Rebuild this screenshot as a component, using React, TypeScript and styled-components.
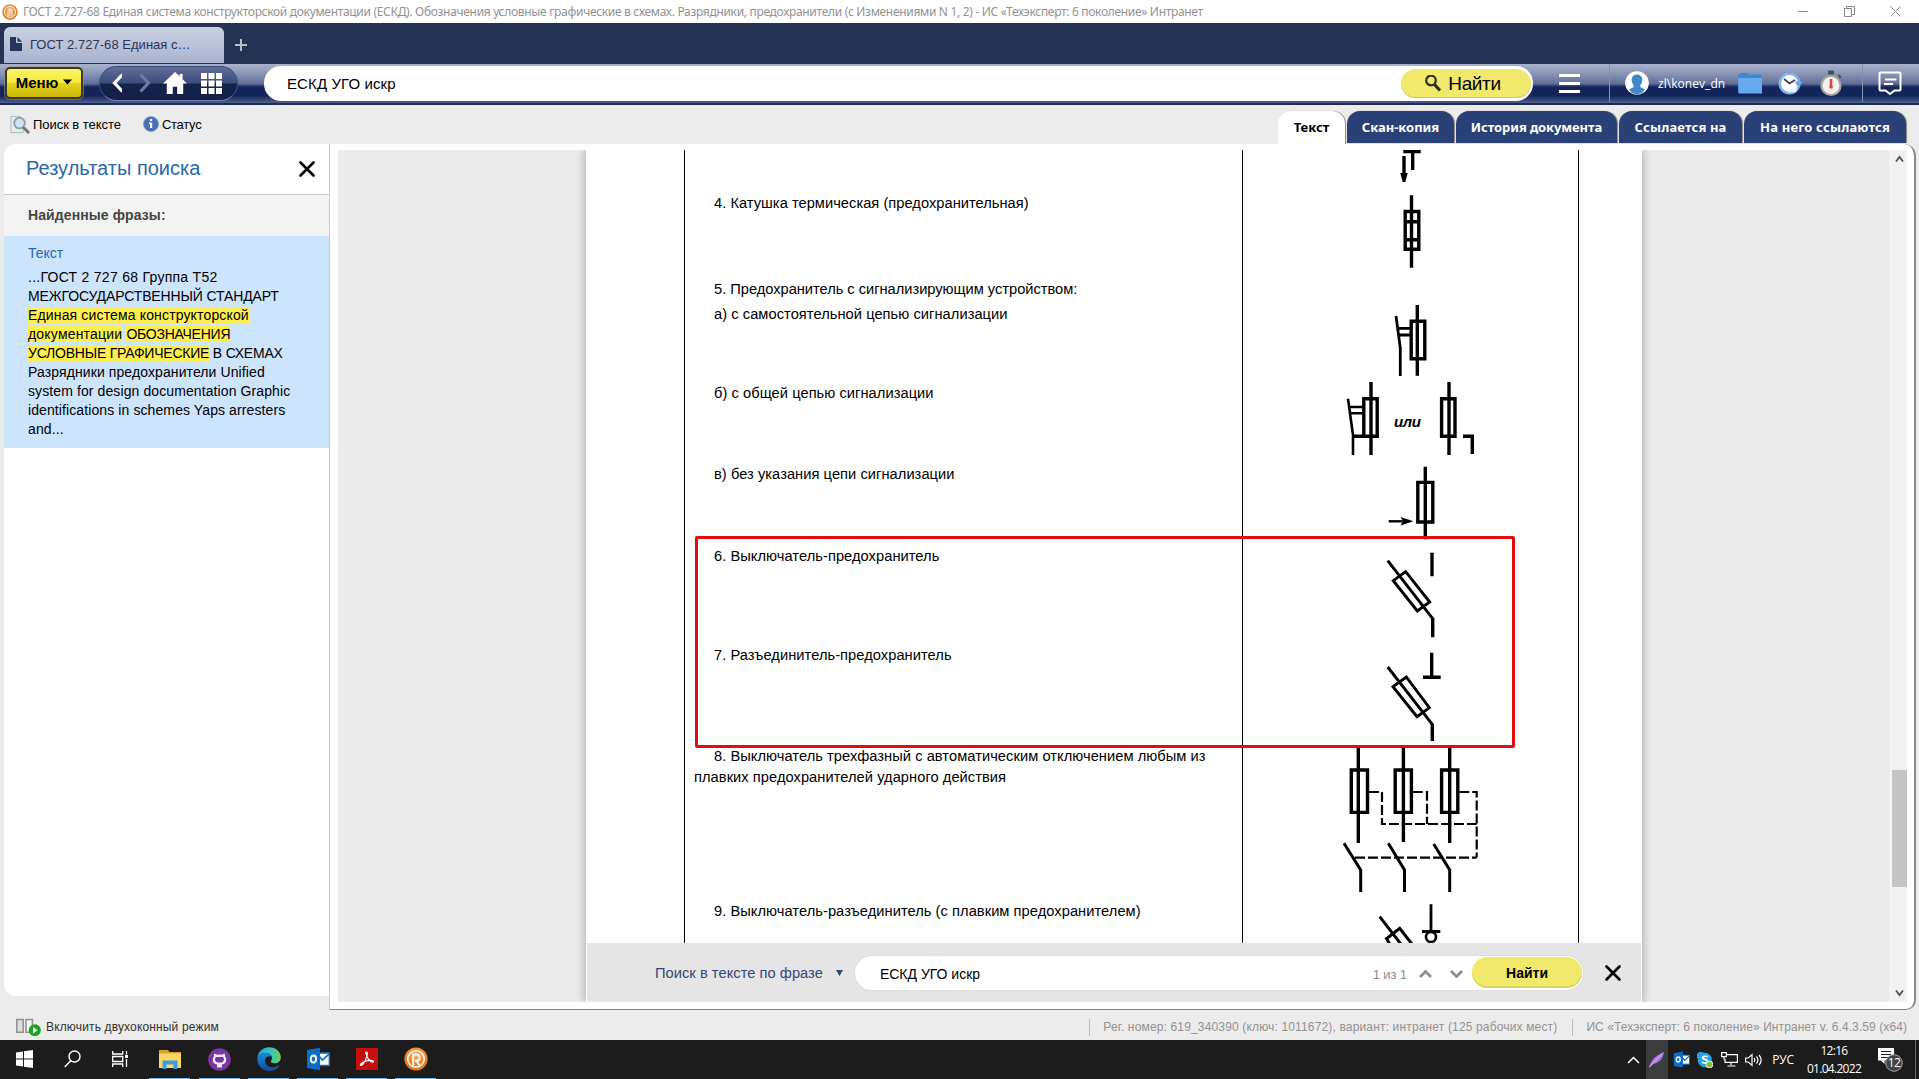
import React from 'react';
import styled, { createGlobalStyle, css } from 'styled-components';

const arial = '"Liberation Sans", Arial, sans-serif';
const segoe = '"Noto Sans", "Open Sans", sans-serif';
const segoeUi = '"Open Sans", "Noto Sans", sans-serif';

const Global = createGlobalStyle`
  * { box-sizing: border-box; }
  body { margin: 0; background: #ececec; font-family: ${arial}; color: #000; }
`;

const Screen = styled.div`
  width: 1919px;
  height: 1079px;
  display: flex;
  flex-direction: column;
  overflow: hidden;
  background: #ececec;
`;

const Label = styled.span<{ $ls?: number }>`
  white-space: pre;
  letter-spacing: ${p => p.$ls ?? 0}px;
`;

/* ---------- window title ---------- */
const TitleBar = styled.header`
  height: 23px;
  flex: none;
  display: flex;
  align-items: center;
  padding: 0 18px 0 2px;
  background: #fff;
  font: 12px/23px ${segoe};
  color: #929292;
`;
const TitleText = styled(Label)`
  flex: 1;
  margin-left: 5px;
`;
const WindowButtons = styled.div`
  display: flex;
  gap: 35px;
  align-items: center;
  height: 20px;
`;

/* ---------- browser tabs ---------- */
const TabStrip = styled.div`
  height: 41px;
  flex: none;
  display: flex;
  align-items: flex-end;
  padding: 0 0 1px 4px;
  background: #273352;
`;
const PageTab = styled.div`
  width: 220px;
  height: 36px;
  display: flex;
  align-items: center;
  gap: 8px;
  padding: 0 6px 2px;
  border-radius: 6px 6px 0 0;
  background: linear-gradient(#cbd1e2, #a9b3ce);
  color: #2b3453;
  font-size: 13px;
`;
const NewTab = styled.div`
  height: 36px;
  display: flex;
  align-items: center;
  margin-left: 11px;
`;

/* ---------- main toolbar ---------- */
const Toolbar = styled.div`
  height: 41px;
  flex: none;
  display: flex;
  align-items: center;
  padding: 0 0 3px 5px;
  background: linear-gradient(#a9b2cd 0, #8792b3 25%, #5f6d96 49%, #3b4a7b 51%, #13255a 57%, #13255a 78%, #56638e 96%, #1d2b54 96%);
`;
const MenuButton = styled.button`
  width: 78px;
  height: 32px;
  display: flex;
  align-items: center;
  justify-content: center;
  gap: 5px;
  padding: 0 0 2px;
  border: 2px solid #3b3a1c;
  border-radius: 5px;
  background: linear-gradient(#faf36a 0, #f5e93c 47%, #e3d11e 53%, #cdb908 100%);
  font: bold 15px ${arial};
  box-shadow: 0 0 0 1px rgba(160, 160, 130, 0.5);
`;
const NavPill = styled.nav`
  width: 139px;
  height: 35px;
  margin-left: 16px;
  display: flex;
  align-items: center;
  padding: 0 15px 0 12px;
  border-radius: 18px;
  border: 1px solid #3f4d7c;
  border-bottom-color: #7682a8;
  background: linear-gradient(#626e97 0, #3e4c7b 48%, #152349 52%, #13204a 100%);
`;
const SearchField = styled.div<{ $large?: boolean }>`
  display: flex;
  align-items: center;
  background: #fff;
  ${p =>
    p.$large
      ? css`
          width: 1269px;
          height: 35px;
          margin-left: 26px;
          padding: 0 2px 0 23px;
          border-radius: 17px;
          font-size: 15px;
        `
      : css`
          width: 732px;
          height: 34px;
          margin-left: 12px;
          padding: 0 1px 0 25px;
          border-radius: 17px;
          font-size: 14px;
          box-shadow: 0 0 0 1px #dedede;
        `}
`;
const FieldText = styled(Label)<{ $drop?: number }>`
  flex: 1;
  padding-top: ${p => p.$drop ?? 0}px;
`;
const FindButton = styled.button<{ $large?: boolean }>`
  display: flex;
  align-items: center;
  justify-content: center;
  border: 0;
  background: #f0e96c;
  color: #000;
  ${p =>
    p.$large
      ? css`
          width: 130px;
          height: 29px;
          gap: 6px;
          padding: 1px 7px 0 0;
          border-radius: 15px;
          font: 19px ${arial};
          box-shadow: inset 0 -1px 0 #cfc765;
        `
      : css`
          width: 110px;
          height: 31px;
          padding: 0;
          border-radius: 16px;
          font: bold 14px ${arial};
          box-shadow: inset 0 -2px 0 #dcd45f;
        `}
`;
const ToolIcon = styled.div<{ $ml: number }>`
  display: flex;
  margin-left: ${p => p.$ml}px;
`;
const Divider = styled.div<{ $ml: number; $mr?: number; $h: number; $c: string }>`
  width: 1px;
  height: ${p => p.$h}px;
  margin-left: ${p => p.$ml}px;
  margin-right: ${p => p.$mr ?? 0}px;
  background: ${p => p.$c};
`;
const UserName = styled(Label)`
  margin-left: 9px;
  width: 80px;
  padding-top: 1px;
  color: #fff;
  font: 12px ${segoeUi};
`;

/* ---------- secondary bar ---------- */
const SubBar = styled.div`
  height: 39px;
  flex: none;
  display: flex;
  align-items: flex-start;
  justify-content: space-between;
  padding: 6px 13px 0 10px;
`;
const Tools = styled.div`
  display: flex;
  align-items: center;
  height: 26px;
  font-size: 13px;
  gap: 3px;
`;
const StatusTool = styled.div`
  display: flex;
  align-items: center;
  gap: 3px;
  margin-left: 19px;
`;
const DocTabs = styled.div`
  display: flex;
  gap: 2px;
`;
const DocTab = styled.div<{ $w: number; $active?: boolean }>`
  width: ${p => p.$w}px;
  height: ${p => (p.$active ? 33 : 32)}px;
  display: flex;
  align-items: center;
  justify-content: center;
  padding-bottom: ${p => (p.$active ? 2 : 0)}px;
  border-radius: 13px 13px 0 0;
  background: ${p => (p.$active ? '#fff' : '#2a4178')};
  color: ${p => (p.$active ? '#000' : '#fff')};
  font: bold 13px ${segoe};
  box-shadow: 1px 0 1px #8d8877;
`;

/* ---------- body ---------- */
const Body = styled.main`
  height: 866px;
  flex: none;
  display: flex;
  padding: 0 3px 0 4px;
`;
const Results = styled.aside`
  width: 325px;
  height: 852px;
  border-radius: 12px 0 0 12px;
  background: #fff;
  overflow: hidden;
`;
const ResultsHead = styled.div`
  height: 51px;
  display: flex;
  align-items: center;
  justify-content: space-between;
  padding: 0 14px 1px 22px;
  border-bottom: 1px solid #c9c9c9;
  font-size: 20px;
  color: #2a68a6;
`;
const FoundHead = styled.div`
  height: 41px;
  padding-left: 24px;
  background: #f3f3f3;
  font: bold 14px/41px ${arial};
  letter-spacing: 0.1px;
  color: #444;
`;
const Hit = styled.div`
  height: 212px;
  padding: 8px 0 0 24px;
  background: #cde4fd;
  font-size: 14px;
  line-height: 19px;
`;
const HitTitle = styled.div`
  margin-bottom: 5px;
  color: #2a68a6;
`;
const HitLine = styled.div<{ $ls?: number }>`
  white-space: pre;
  letter-spacing: ${p => p.$ls ?? 0.1}px;
`;
const Mark = styled.mark<{ $ls?: number }>`
  background: #ffee50;
  color: inherit;
  letter-spacing: ${p => (p.$ls === undefined ? 'inherit' : `${p.$ls}px`)};
`;

const Viewer = styled.section`
  width: 1587px;
  height: 866px;
  display: flex;
  padding: 6px 7px 7px 8px;
  background: #fff;
  border: 1px solid #8a8a8a;
  border-top: 0;
  border-left-color: #c8c8c8;
  border-radius: 0 12px 10px 0;
  border-bottom-width: 1px;
  border-bottom-color: #858585;
  border-right-width: 2px;
`;
const Canvas = styled.div`
  width: 1552px;
  flex: none;
  height: 852px;
  padding-left: 248px;
  background: #ebebeb;
`;
const Sheet = styled.div`
  width: 1056px;
  height: 852px;
  background: #fff;
  box-shadow: 0 0 9px 1px rgba(0, 0, 0, 0.28);
  clip-path: inset(0 -14px);
`;
const TableArea = styled.div`
  position: relative;
  width: 895px;
  height: 793px;
  margin-left: 98px;
  border-left: 1px solid #000;
  border-right: 1px solid #000;
`;
const Row = styled.div<{ $h: number }>`
  display: grid;
  grid-template-columns: 558px 335px;
  height: ${p => p.$h}px;
`;
const TextCell = styled.div<{ $ls?: number }>`
  padding: 1px 0 0 9px;
  border-right: 1px solid #000;
  font-size: 14.67px;
  line-height: 21px;
  text-indent: 20px;
  letter-spacing: ${p => p.$ls ?? 0.05}px;
  white-space: pre;
`;
const Drawing = styled.svg`
  display: block;
  stroke: #000;
  stroke-width: 3.4;
  fill: none;
`;
const RedFrame = styled.div`
  position: absolute;
  left: 10px;
  top: 386px;
  width: 820px;
  height: 212px;
  border: 3px solid #e40d0d;
  border-radius: 2px;
`;
const FindBar = styled.div`
  height: 59px;
  width: 1054px;
  margin-left: 1px;
  padding: 0 20px 0 68px;
  display: flex;
  align-items: center;
  background: #e5e5e5;
`;
const Mode = styled.div`
  display: flex;
  align-items: center;
  gap: 13px;
  color: #34457c;
  font-size: 14.67px;
`;
const Counter = styled(Label)`
  color: #8d8d8d;
  font-size: 13px;
  padding-top: 3px;
  margin-right: 12px;
`;
const Arrows = styled.div`
  display: flex;
  gap: 18px;
  margin: 2px 9px 0 0;
`;
const CloseFind = styled.div`
  display: flex;
  margin-left: 22px;
`;
const ScrollBar = styled.div`
  width: 17px;
  flex: none;
  height: 852px;
  display: flex;
  flex-direction: column;
  align-items: center;
  justify-content: space-between;
  background: #f1f1f1;
  border-left: 1px solid #fafafa;
  padding: 5px 0;
`;
const ScrollTrack = styled.div`
  flex: 1;
  width: 15px;
  padding-top: 607px;
`;
const ScrollThumb = styled.div`
  height: 117px;
  background: #c4c4c4;
`;

/* ---------- status bar ---------- */
const StatusBar = styled.footer`
  height: 30px;
  flex: none;
  display: flex;
  align-items: center;
  padding: 4px 12px 0 16px;
  font-size: 12px;
  color: #929292;
`;
const TwoPane = styled.div`
  flex: 1;
  display: flex;
  align-items: center;
  gap: 5px;
  color: #333;
`;

/* ---------- taskbar ---------- */
const TaskBar = styled.div`
  height: 39px;
  flex: none;
  display: flex;
  background: #1c1c1c;
  color: #fff;
  font: 12px/22px ${segoeUi};
`;
const Task = styled.div<{ $w?: number; $open?: boolean }>`
  width: ${p => p.$w ?? 49}px;
  display: flex;
  align-items: center;
  justify-content: center;
  padding-bottom: 1px;
  background: ${p => (p.$open ? 'linear-gradient(90deg, transparent 4px, #76b9ed 4px, #76b9ed 45px, transparent 45px) 0 38px / 100% 1px no-repeat' : 'none')};
`;
const Tray = styled.div`
  margin-left: auto;
  display: flex;
  align-items: center;
`;
const TrayItem = styled.div<{ $w: number; $lit?: boolean }>`
  width: ${p => p.$w}px;
  height: 39px;
  display: flex;
  align-items: center;
  justify-content: center;
  background: ${p => (p.$lit ? '#3d3d3d' : 'none')};
`;
const Clock = styled.div`
  width: 62px;
  text-align: center;
  line-height: 18px;
  letter-spacing: -0.7px;
`;
const Notice = styled.div`
  width: 51px;
  height: 39px;
  display: flex;
  align-items: center;
  justify-content: center;
  border-right: 1px solid #6a6a6a;
  margin-right: 3px;
`;

const Cross = ({ size, w = 2.6 }: { size: number; w?: number }) => (
  <svg width={size} height={size} viewBox="0 0 16 16" stroke="#000" strokeWidth={w} strokeLinecap="round">
    <path d="M1.500 1.500 14.500 14.500M14.500 1.500 1.500 14.500" />
  </svg>
);

const Orb = ({ size, letter }: { size: number; letter?: boolean }) => (
  <svg width={size} height={size} viewBox="0 0 24 24" fill="none">
    <defs>
      <radialGradient id={`orb${size}`} cx=".5" cy=".35" r=".65">
        <stop offset="0" stopColor="#f7b060" />
        <stop offset="1" stopColor="#dd6f1c" />
      </radialGradient>
    </defs>
    <circle cx="12" cy="12" r="11.600" fill={`url(#orb${size})`} />
    <circle cx="12" cy="12" r="8.300" stroke="#fff" strokeWidth="1.400" />
    {letter ? (
      <path d="M9.200 20V7.400h3.400a3 3 0 0 1 0 6.200H11M12.400 13.800l3.400 5.200" stroke="#fff" strokeWidth="1.800" />
    ) : (
      <path d="M9 19v-8.500a3 3 0 0 1 6 0V19M12 7v12" stroke="#fff" strokeWidth="1.400" />
    )}
  </svg>
);

const Outlook = ({ size }: { size: number }) => (
  <svg width={size} height={size} viewBox="0 0 24 24">
    <rect x="10" y="6" width="13" height="12.500" fill="#fff" />
    <path d="M13 6h10.300v12.500H13z" fill="#fff" stroke="#0a6fc4" strokeWidth="1.400" />
    <path d="m13.400 9.500 3 3.600L23 7.200" fill="none" stroke="#0a6fc4" strokeWidth="1.700" />
    <path d="M1 3 14 .8v22.400L1 21z" fill="#0a6fc4" />
    <ellipse cx="7.400" cy="12" rx="2.700" ry="3.500" fill="none" stroke="#fff" strokeWidth="1.900" />
  </svg>
);

type RowData = { y: number; h: number; ls?: number; text?: string; art?: React.ReactNode };

const rows: RowData[] = [
  {
    y: 150,
    h: 42,
    art: (
      <>
        <path d="M1403.3 151.5h17.4M1412.7 151v19M1404 156v18" />
        <path d="M1400.3 173h7.4l-2.4 9h-2.6z" fill="#000" stroke="none" />
      </>
    ),
  },
  {
    y: 192,
    h: 86,
    ls: 0.03,
    text: '4. Катушка термическая (предохранительная)',
    art: <path d="M1411.5 195.3v72.4M1405.2 211.5h13.6v37.7h-13.6zM1405 221.7h14M1405 239.7h14" />,
  },
  { y: 278, h: 25, ls: -0.02, text: '5. Предохранитель с сигнализирующим устройством:' },
  {
    y: 303,
    h: 79,
    text: 'а) с самостоятельной цепью сигнализации',
    art: (
      <>
        <path d="M1417.3 305v70.7M1411.2 321.2h13.6v37.6h-13.6z" />
        <path d="M1396 316l4.3 32v28M1398 328.3h13M1399 335h12" strokeWidth="2.800" />
      </>
    ),
  },
  {
    y: 382,
    h: 81,
    text: 'б) с общей цепью сигнализации',
    art: (
      <>
        <path d="M1371 382v73M1363.8 398.8h13.4v37.4h-13.4zM1449 382v73M1441.6 398.8h13.4v37.4h-13.4zM1463 436.3h9.3v17.7M1352.5 436.3h11" />
        <path d="M1348 398.7l5 36.3v20M1350 407h13M1350.5 413.2h12.5" strokeWidth="2.600" />
        <text x="1394" y="426.500" fontFamily={arial} fontSize="15" fontStyle="italic" fontWeight="bold" fill="#000" stroke="none" textLength="27">
          или
        </text>
      </>
    ),
  },
  {
    y: 463,
    h: 82,
    text: 'в) без указания цепи сигнализации',
    art: (
      <>
        <path d="M1425.3 466.7v72.5M1417.8 482.4h15v39.6h-15z" />
        <path d="M1388.7 521.3h14" strokeWidth="2.400" />
        <path d="M1400.5 517l13 4.3-13 4.3 2.5-4.3z" fill="#000" stroke="none" />
      </>
    ),
  },
  {
    y: 545,
    h: 99,
    text: '6. Выключатель-предохранитель',
    art: (
      <>
        <path d="M1432 552.7v23.6M1432.7 618v19.3" />
        <path d="M1387.7 560.7l45 58M1393.3 580.7l12.4-9 24 30.3-12.4 9z" strokeWidth="2.900" />
      </>
    ),
  },
  {
    y: 644,
    h: 101,
    text: '7. Разъединитель-предохранитель',
    art: (
      <>
        <path d="M1431.7 652.7v24M1423 677.3h17.7M1432.3 723.5v17.5" />
        <path d="M1387.7 667l44.6 57.3M1393 686.7l13.3-9.7 23 30.7-12.3 9z" strokeWidth="2.900" />
      </>
    ),
  },
  {
    y: 745,
    h: 155,
    text: '8. Выключатель трехфазный с автоматическим отключением любым из\nплавких предохранителей ударного действия',
    art: (
      <>
        <path d="M1358.3 747v96M1403.4 747v95M1449.7 747v96M1351.3 770h16.2v42.4h-16.2zM1395.2 770h16.2v42.4h-16.2zM1441.6 770h16.2v42.4h-16.2z" />
        <path d="M1344 843.3l16.7 26.7v22M1388.3 843.3l16.2 26.7v22M1433.7 844l16 26v22" strokeWidth="3" />
        <g strokeWidth="2.200" strokeDasharray="10 3">
          <path d="M1369 792h13v32h94.7M1412.7 792h14.3v32M1459.3 792h17.4v65.3M1355 857.7h121.7" />
        </g>
      </>
    ),
  },
  {
    y: 900,
    h: 43,
    text: '9. Выключатель-разъединитель (с плавким предохранителем)',
    art: (
      <>
        <path d="M1431 904.3v27M1422 931.5h18.3" strokeWidth="2.800" />
        <circle cx="1431" cy="937" r="5" strokeWidth="2.600" />
        <path d="M1379.7 916.7l22 28.4M1391 946l-4.5-7.3 13.2-10.4 14 18" strokeWidth="3" />
      </>
    ),
  },
];

export default function App() {
  return (
    <Screen>
      <Global />
      <TitleBar>
        <Orb size={16} />
        <TitleText $ls={-0.313}>
          ГОСТ 2.727-68 Единая система конструкторской документации (ЕСКД). Обозначения условные графические в схемах. Разрядники, предохранители (с Изменениями N 1, 2) - ИС «Техэксперт: 6 поколение» Интранет
        </TitleText>
        <WindowButtons>
          <svg width="11" height="11" stroke="#8a8a8a" fill="none"><path d="M0 5.500h10" /></svg>
          <svg width="11" height="11" stroke="#8a8a8a" fill="none"><path d="M.5 2.500h7v8h-7zM2.500 2.500v-2h8v8h-2.500" /></svg>
          <svg width="11" height="11" stroke="#8a8a8a" fill="none"><path d="M.5.5l10 10M10.500.5l-10 10" /></svg>
        </WindowButtons>
      </TitleBar>

      <TabStrip>
        <PageTab>
          <svg width="12" height="14" fill="#27335a"><path d="M0 0h6v6h6v8H0zM7.500 0 12 4.700H7.500z" /></svg>
          <Label $ls={0.03}>ГОСТ 2.727-68 Единая с…</Label>
        </PageTab>
        <NewTab>
          <svg width="12" height="12" stroke="#b9bfcc" strokeWidth="2"><path d="M6 0v12M0 6h12" /></svg>
        </NewTab>
      </TabStrip>

      <Toolbar>
        <MenuButton>
          <Label>Меню</Label>
          <svg width="9" height="6"><path d="M0 .5h9L4.500 5.500z" /></svg>
        </MenuButton>
        <NavPill>
          <svg width="12" height="20" fill="none" stroke="#fff" strokeWidth="3.200"><path d="M10.500 1.500 2.500 10l8 8.500" /></svg>
          <ToolIcon $ml={17}>
            <svg width="12" height="20" fill="none" stroke="#6f7a9c" strokeWidth="3.200"><path d="M1.500 1.500 9.500 10l-8 8.500" /></svg>
          </ToolIcon>
          <ToolIcon $ml={12}>
            <svg width="24" height="22" fill="#fff"><path d="M12 0 0 11.500h3.800V22h6v-7.200h4.400V22h6V11.500H24l-4.400-4.200V2h-3v2.300z" /></svg>
          </ToolIcon>
          <ToolIcon $ml={14}>
            <svg width="21" height="21" fill="#fff">
              {[0, 7.5, 15].map(y => [0, 7.5, 15].map(x => <rect key={`${x}-${y}`} x={x} y={y} width="6" height="6" />))}
            </svg>
          </ToolIcon>
        </NavPill>
        <SearchField $large>
          <FieldText $ls={0.1}>ЕСКД УГО искр</FieldText>
          <FindButton $large>
            <svg width="18" height="18" fill="none" stroke="#33301a">
              <circle cx="7" cy="5.500" r="4.800" strokeWidth="2.200" />
              <path d="M10.500 9.500 16 15.500" strokeWidth="3.200" />
            </svg>
            <Label $ls={-0.35}>Найти</Label>
          </FindButton>
        </SearchField>
        <ToolIcon $ml={26}>
          <svg width="21" height="19" fill="#fff"><path d="M0 0h21v3H0zM0 8h21v3H0zM0 16h21v3H0z" /></svg>
        </ToolIcon>
        <Divider $ml={29} $h={38} $c="#8792b3" />
        <ToolIcon $ml={15}>
          <svg width="24" height="24" viewBox="0 0 24 24">
            <circle cx="12" cy="12" r="11.800" fill="#fff" />
            <path d="M12 3.500c3.600 0 5.300 2.500 5.300 5.600 0 2.500-1 4-2 5.200v1.800l4.700 2.400a11 11 0 0 1-16 0l4.700-2.400v-1.800c-1-1.200-2-2.700-2-5.200 0-3.100 1.700-5.600 5.300-5.600z" fill="#3f86c6" />
            <path d="M4.500 19a11 11 0 0 0 15 0l-2 2.800-5.500 2-5.500-2z" fill="#3f86c6" />
          </svg>
        </ToolIcon>
        <UserName $ls={0.05}>zl\konev_dn</UserName>
        <ToolIcon $ml={0}>
          <svg width="24" height="21"><path d="M0 1.500h2L3 0h7l1 1.500h12V20H0z" fill="#3f86d0" /><path d="M0 5h24v15.500H1z" fill="#67a9ef" /></svg>
        </ToolIcon>
        <ToolIcon $ml={16}>
          <svg width="25" height="23" viewBox="0 0 25 23">
            <circle cx="11.500" cy="11.500" r="9.700" fill="#fff" stroke="#7db4ee" strokeWidth="2.600" />
            <path d="M17 9.500h8l-5 7z" fill="#67a9ef" />
            <path d="M10 20.500 20 13l-2 7z" fill="#e9f2fc" />
            <path d="m6 7 5.500 4.500L17 8" fill="none" stroke="#3c3f4a" strokeWidth="1.800" />
          </svg>
        </ToolIcon>
        <ToolIcon $ml={17}>
          <svg width="23" height="27" viewBox="0 0 23 27">
            <path d="M8.500 1h5v3h-5zM18 4.500l3 2-1.500 2" fill="#4b4b50" stroke="#4b4b50" />
            <circle cx="11" cy="15.500" r="9.500" fill="#f4f2ee" stroke="#aaa59d" strokeWidth="2.200" />
            <path d="M11 9v8" stroke="#e2453c" strokeWidth="2.600" />
            <circle cx="11" cy="17" r="1.800" fill="#e2453c" />
          </svg>
        </ToolIcon>
        <Divider $ml={19} $h={38} $c="#8792b3" />
        <ToolIcon $ml={15}>
          <svg width="24" height="25" fill="none" stroke="#fff" strokeWidth="2">
            <path d="M2.500 1.500h19a1 1 0 0 1 1 1v16a1 1 0 0 1-1 1h-5L12 23l-4.500-3.500h-5a1 1 0 0 1-1-1v-16a1 1 0 0 1 1-1z" />
            <path d="M7 8.500h11.500M6 13h9" />
          </svg>
        </ToolIcon>
      </Toolbar>

      <SubBar>
        <Tools>
          <svg width="20" height="19" viewBox="0 0 21 19">
            <path d="M1 1h9l4 3v14H1z" fill="#e4eef0" stroke="#a9b9bd" />
            <circle cx="10" cy="8" r="5.600" fill="#cfe3f1" stroke="#8fa0aa" strokeWidth="2" />
            <path d="m14.500 13 4.500 4.500" stroke="#777" strokeWidth="3" strokeLinecap="round" />
          </svg>
          <Label $ls={-0.05}>Поиск в тексте</Label>
          <StatusTool>
            <svg width="16" height="16" viewBox="0 0 16 16">
              <circle cx="8" cy="8" r="7.600" fill="#4a70b8" stroke="#8aa3cf" strokeWidth=".8" />
              <path d="M7 3h2.200v2H7zM6 6.500h3.200V12H7V8H6z" fill="#fff" />
            </svg>
            <Label $ls={-0.25}>Статус</Label>
          </StatusTool>
        </Tools>
        <DocTabs>
          <DocTab $w={67} $active>Текст</DocTab>
          <DocTab $w={107}><Label>Скан-копия</Label></DocTab>
          <DocTab $w={161}><Label $ls={-0.1}>История документа</Label></DocTab>
          <DocTab $w={123}><Label $ls={0.15}>Ссылается на</Label></DocTab>
          <DocTab $w={162}><Label $ls={0.16}>На него ссылаются</Label></DocTab>
        </DocTabs>
      </SubBar>

      <Body>
        <Results>
          <ResultsHead>
            <Label>Результаты поиска</Label>
            <Cross size={16} />
          </ResultsHead>
          <FoundHead>Найденные фразы:</FoundHead>
          <Hit>
            <HitTitle>Текст</HitTitle>
            <HitLine $ls={0.27}>...ГОСТ 2 727 68 Группа Т52</HitLine>
            <HitLine $ls={-0.13}>МЕЖГОСУДАРСТВЕННЫЙ СТАНДАРТ</HitLine>
            <HitLine $ls={0.15}><Mark>Единая система конструкторской</Mark></HitLine>
            <HitLine $ls={0.2}><Mark>документации</Mark> <Mark $ls={-0.25}>ОБОЗНАЧЕНИЯ</Mark></HitLine>
            <HitLine $ls={-0.22}><Mark>УСЛОВНЫЕ ГРАФИЧЕСКИЕ</Mark> В СХЕМАХ</HitLine>
            <HitLine>Разрядники предохранители Unified</HitLine>
            <HitLine>system for design documentation Graphic</HitLine>
            <HitLine>identifications in schemes Yaps arresters</HitLine>
            <HitLine>and...</HitLine>
          </Hit>
        </Results>

        <Viewer>
          <Canvas>
            <Sheet>
              <TableArea>
                {rows.map(r => (
                  <Row key={r.y} $h={r.h}>
                    <TextCell $ls={r.ls}>{r.text}</TextCell>
                    <Drawing width="335" height={r.h} viewBox={`1243 ${r.y} 335 ${r.h}`}>{r.art}</Drawing>
                  </Row>
                ))}
                <RedFrame />
              </TableArea>
              <FindBar>
                <Mode>
                  <Label $ls={0.04}>Поиск в тексте по фразе</Label>
                  <svg width="7" height="6" fill="#34457c"><path d="M0 0h7L3.500 6z" /></svg>
                </Mode>
                <SearchField>
                  <FieldText $drop={2}>ЕСКД УГО искр</FieldText>
                  <Counter $ls={-0.1}>1 из 1</Counter>
                  <Arrows>
                    <svg width="13" height="8" fill="none" stroke="#8f8f8f" strokeWidth="2.800"><path d="M1 7l5.500-5.500L12 7" /></svg>
                    <svg width="13" height="8" fill="none" stroke="#8f8f8f" strokeWidth="2.800"><path d="M1 1l5.500 5.500L12 1" /></svg>
                  </Arrows>
                  <FindButton>Найти</FindButton>
                </SearchField>
                <CloseFind><Cross size={16} /></CloseFind>
              </FindBar>
            </Sheet>
          </Canvas>
          <ScrollBar>
            <svg width="9" height="8" fill="none" stroke="#505050" strokeWidth="1.800"><path d="M1 6.500 4.500 2 8 6.500" /></svg>
            <ScrollTrack><ScrollThumb /></ScrollTrack>
            <svg width="9" height="8" fill="none" stroke="#505050" strokeWidth="1.800"><path d="M1 1.500 4.500 6 8 1.500" /></svg>
          </ScrollBar>
        </Viewer>
      </Body>

      <StatusBar>
        <TwoPane>
          <svg width="25" height="20" viewBox="0 0 25 20">
            <path d="M.8 2.500h6.400v12.700H.8z" fill="#dedede" stroke="#8f8f8f" strokeWidth="1.500" />
            <path d="M10 2.500h6.400v12.700H10z" fill="#f2f2f2" stroke="#8f8f8f" strokeWidth="1.500" />
            <circle cx="18.800" cy="13.300" r="6" fill="#1ba31b" />
            <path d="M17 10v6.600l4.500-3.300z" fill="#fff" />
          </svg>
          <Label $ls={0.15}>Включить двухоконный режим</Label>
        </TwoPane>
        <Divider $ml={0} $mr={13} $h={17} $c="#bcbcbc" />
        <Label $ls={0.155}>Рег. номер: 619_340390 (ключ: 1011672), вариант: интранет (125 рабочих мест)</Label>
        <Divider $ml={15} $mr={13} $h={17} $c="#bcbcbc" />
        <Label $ls={0.085}>ИС «Техэксперт: 6 поколение» Интранет v. 6.4.3.59 (x64)</Label>
      </StatusBar>

      <TaskBar>
        <Task $w={48}>
          <svg width="17" height="18" fill="#fff"><path d="M0 2.500 7 1.500v7H0zM8 1.300 17 0v8.500H8zM0 9.500h7v7L0 15.500zM8 9.500h9V18l-9-1.300z" /></svg>
        </Task>
        <Task $w={48}>
          <svg width="17" height="18" fill="none" stroke="#fff" strokeWidth="1.400"><circle cx="10.500" cy="6.500" r="5.500" /><path d="M6.700 10.800.7 17" /></svg>
        </Task>
        <Task $w={49}>
          <svg width="17" height="18" fill="none" stroke="#fff" strokeWidth="1.300"><path d="M.7 1v3h10V1M.7 17v-3h10v3M.7 6.500h10v5H.7zM14.500 1v3.500M14.500 9v8" /><path d="M13 5h3v3h-3z" fill="#fff" stroke="none" /></svg>
        </Task>
        <Task $open $w={50}>
          <svg width="22" height="19" viewBox="0 0 22 19"><path d="M0 0h9l1.500 2H22v16H0z" fill="#dba126" /><path d="M0 3.500h22V18H0z" fill="#fbd667" /><path d="M3.500 10.500h15V19h-4v-4.500h-7V19h-4z" fill="#3f9be0" /></svg>
        </Task>
        <Task $open>
          <svg width="23" height="23" viewBox="0 0 24 24"><circle cx="12" cy="12" r="11.800" fill="#7b35a5" /><path d="M9.500 20.300v-3c-3-.6-4.500-2.300-4.500-5.300 0-1.300.4-2.400 1.200-3.200-.2-1-.1-2 .3-2.900 1 0 2 .5 2.900 1.200a10 10 0 0 1 5.200 0c.9-.7 1.900-1.200 2.900-1.200.4.900.5 1.900.3 2.900.8.800 1.200 1.900 1.200 3.200 0 3-1.500 4.700-4.500 5.300v3z" fill="#f5effa" /><path d="M8.600 9.500h6.800c1 .7 1.500 1.600 1.200 3-.3 2-2 2.700-4.600 2.700s-4.300-.7-4.600-2.700c-.3-1.400.2-2.300 1.200-3z" fill="#7b35a5" /></svg>
        </Task>
        <Task $open>
          <svg width="24" height="24" viewBox="0 0 24 24">
            <defs>
              <linearGradient id="edgeTop" x1="0" x2="1"><stop offset="0" stopColor="#2a9fe0" /><stop offset=".55" stopColor="#35c3c0" /><stop offset="1" stopColor="#67d64c" /></linearGradient>
              <linearGradient id="edgeLow" x1="0" x2="0" y1="0" y2="1"><stop offset="0" stopColor="#1a8ad8" /><stop offset="1" stopColor="#0f4c9c" /></linearGradient>
            </defs>
            <path d="M.4 11C1 4.500 6 .2 12 .2 19 .2 23.800 5 23.800 10.200c0 4-3 6-6 6-2.600 0-4-.8-4-1.700 0-.8 1.200-1.300 1.200-3.500C15 8 12 6 8.500 6 4.500 6 1.500 8 .4 11z" fill="url(#edgeTop)" />
            <path d="M.4 11C1.500 7.800 4.500 6 8.500 6c3 0 5.500 1.500 6.300 3.600C9.500 8 7 12 8.500 16c1.600 4.200 7 5.800 13 2.500.6-.2.800.2.500.7A12 12 0 0 1 12 24C5 24-.3 18 .4 11z" fill="url(#edgeLow)" />
          </svg>
        </Task>
        <Task $open><Outlook size={24} /></Task>
        <Task $open>
          <svg width="22" height="22" viewBox="0 0 22 22"><rect width="22" height="22" fill="#c50e0e" /><path d="M10.500 4c2 0 0 6-1.500 9s-3.500 5-4.500 4.300C3.500 16 8 13.300 12 12.600s6 0 5.500 1.200c-.7 1.200-4.500-.8-6-4.300S9 4 10.500 4z" fill="none" stroke="#fff" strokeWidth="1.200" /></svg>
        </Task>
        <Task $open><Orb size={24} letter /></Task>
        <Tray>
          <TrayItem $w={26}><svg width="13" height="8" fill="none" stroke="#fff" strokeWidth="1.500"><path d="M1 7l5.500-5.500L12 7" /></svg></TrayItem>
          <TrayItem $w={22} $lit><svg width="16" height="16"><path d="M0 15.500C2 8 7 3 15 0c-1 7-5 11-11 12z" fill="#a978dd" /><path d="M0 15.500 13 2" stroke="#d9bdf5" /></svg></TrayItem>
          <TrayItem $w={27}><Outlook size={17} /></TrayItem>
          <TrayItem $w={20}>
            <svg width="16" height="16" viewBox="0 0 16 16"><path d="M4 0c1.500 0 2 .5 3 .8a7 7 0 0 1 7.700 8.300A4 4 0 0 1 9 15.200 7 7 0 0 1 .9 7 4 4 0 0 1 4 0z" fill="#1fa5e6" /><path d="M10.500 5.200C10 4 6 3.700 5.600 5.500 5.300 7.700 10.600 7 10.500 9.600c-.2 2-4.700 2-5.400.2" fill="none" stroke="#fff" strokeWidth="1.700" /><circle cx="12.500" cy="12.500" r="3.400" fill="#86b93c" stroke="#fff" strokeWidth=".8" /></svg>
          </TrayItem>
          <TrayItem $w={28}><svg width="17" height="15" fill="none" stroke="#fff" strokeWidth="1.200"><path d="M6 2.600h10.400v7.800H4V7M10 10.400V13M6.500 14h8M.6.600h4.800v4H.6zM3 4.600v3" /></svg></TrayItem>
          <TrayItem $w={20}><svg width="17" height="14" fill="none" stroke="#fff" strokeWidth="1.200"><path d="M.6 5h2.600L7 1.500v11L3.200 9H.6zM9 5c1 1.200 1 2.800 0 4M11.500 3.500c1.800 2.200 1.800 4.800 0 7M14 2c2.600 3 2.600 7 0 10" /></svg></TrayItem>
          <TrayItem $w={40}><Label $ls={-0.2}>РУС</Label></TrayItem>
          <Clock>12:16<br />01.04.2022</Clock>
          <Notice>
            <svg width="25" height="25" viewBox="0 0 25 25">
              <path d="M0 1h16v12.500H6.500V17L3 13.500H0z" fill="#fff" />
              <path d="M3 4.500h10M3 7.500h10M3 10.500h7" stroke="#1c1c1c" strokeWidth="1.200" />
              <circle cx="16" cy="16" r="8.300" fill="#444" stroke="#a8a8a8" />
              <text x="16" y="20.300" textAnchor="middle" fontFamily={segoeUi} fontSize="12" fill="#fff" letterSpacing="-.6">12</text>
            </svg>
          </Notice>
        </Tray>
      </TaskBar>
    </Screen>
  );
}
